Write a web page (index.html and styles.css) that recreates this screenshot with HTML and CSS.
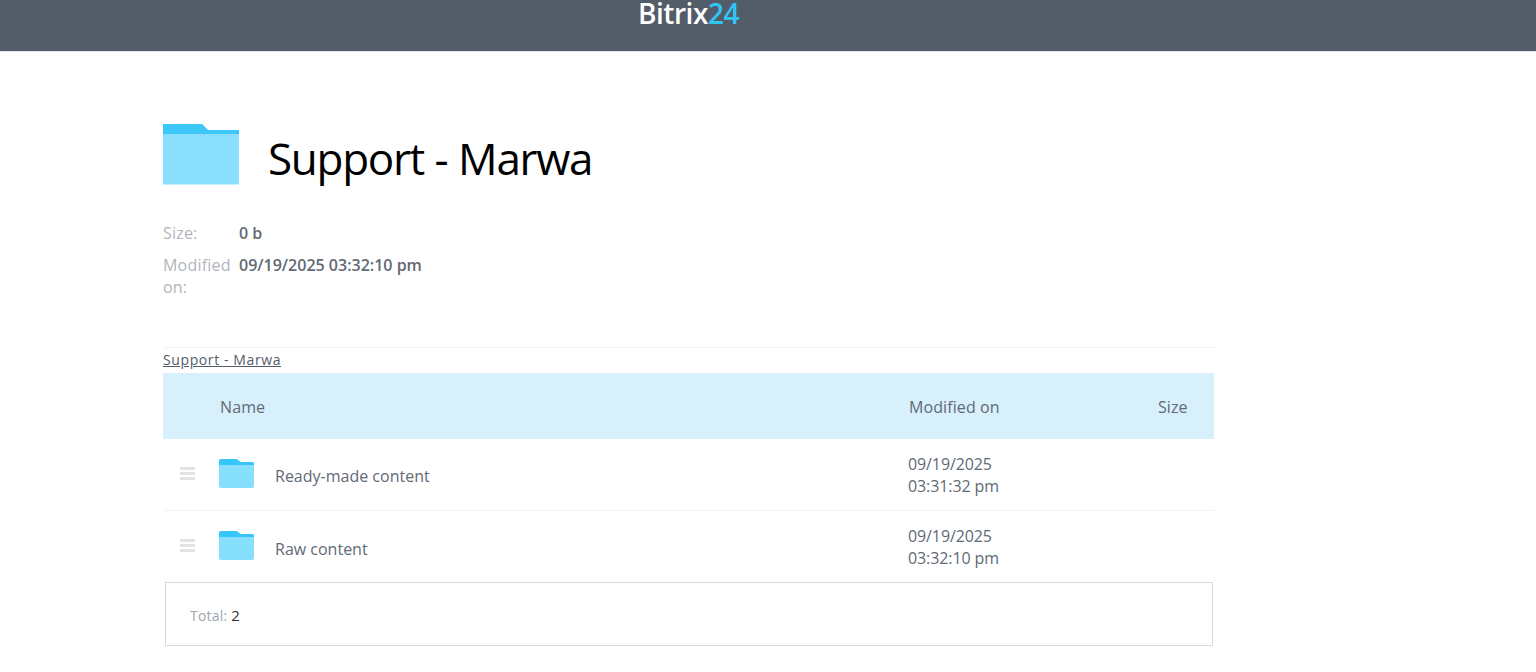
FILE: index.html
```html
<!DOCTYPE html>
<html lang="en">
<head>
<meta charset="utf-8">
<title>Support - Marwa</title>
<link rel="stylesheet" href="styles.css">
</head>
<body>
<header class="topbar">
  <div class="logo">Bitrix<span class="logo-num">24</span></div>
</header>
<main class="content">
  <div class="title-row">
    <svg class="title-icon" viewBox="0 0 76 61" aria-hidden="true">
      <path fill="#8ae0fc" d="M0 0H39L45 6H76V60.500H0Z"/>
      <path fill="#3ec8fa" d="M0 0H39L45 6H76V10H0Z"/>
    </svg>
    <h1 class="title">Support - Marwa</h1>
  </div>
  <dl class="meta">
    <dt class="meta-label">Size:</dt>
    <dd class="meta-value">0 b</dd>
    <dt class="meta-label">Modified on:</dt>
    <dd class="meta-value">09/19/2025 03:32:10 pm</dd>
  </dl>
  <nav class="crumbs"><a class="crumb" href="#">Support - Marwa</a></nav>
  <div class="grid">
    <div class="grid-head">
      <div class="cell-name head-name">Name</div>
      <div class="cell-date">Modified on</div>
      <div class="cell-size">Size</div>
    </div>
    <div class="grid-row">
      <div class="handle"><i></i><i></i><i></i></div>
      <svg class="row-icon" viewBox="0 0 35 29" aria-hidden="true">
        <path fill="#85dffd" d="M2 0H16Q18 0 19 1L21.500 3H33Q35 3 35 5V27Q35 29 33 29H2Q0 29 0 27V2Q0 0 2 0Z"/>
        <path fill="#35c6fb" d="M2 0H16Q18 0 19 1L21.500 3H33Q35 3 35 5V6H0V2Q0 0 2 0Z"/>
      </svg>
      <div class="cell-name row-name">Ready-made content</div>
      <div class="row-date">09/19/2025<br>03:31:32 pm</div>
    </div>
    <div class="grid-row">
      <div class="handle"><i></i><i></i><i></i></div>
      <svg class="row-icon" viewBox="0 0 35 29" aria-hidden="true">
        <path fill="#85dffd" d="M2 0H16Q18 0 19 1L21.500 3H33Q35 3 35 5V27Q35 29 33 29H2Q0 29 0 27V2Q0 0 2 0Z"/>
        <path fill="#35c6fb" d="M2 0H16Q18 0 19 1L21.500 3H33Q35 3 35 5V6H0V2Q0 0 2 0Z"/>
      </svg>
      <div class="cell-name row-name">Raw content</div>
      <div class="row-date">09/19/2025<br>03:32:10 pm</div>
    </div>
  </div>
  <div class="total"><span class="total-label">Total:</span> <span class="total-num">2</span></div>
</main>
</body>
</html>
```
FILE: styles.css
```css
* { box-sizing: border-box; }
html, body { margin: 0; padding: 0; background: #fff; }
body {
  font-family: "Open Sans", "Noto Sans", "Liberation Sans", sans-serif;
  color: #535c69;
  overflow: hidden;
  height: 672px;
}
.topbar {
  height: 52px;
  background: #535c69;
  border-bottom: 1px solid #e4e7ec;
  padding-left: 638px;
}
.logo {
  font-size: 28px;
  line-height: 26px;
  font-weight: 600;
  color: #fff;
  letter-spacing: -0.45px;
}
.logo-num { color: #2fc6f6; }
.content {
  width: 1051px;
  margin-left: 163px;
  padding-top: 72px;
}
.title-row {
  display: flex;
  align-items: center;
  gap: 29px;
  height: 61px;
}
.title-icon { width: 76px; height: 61px; display: block; flex: none; }
.title {
  margin: 0;
  padding-top: 6px;
  font-size: 44px;
  line-height: 68px;
  font-weight: 400;
  color: #000;
  letter-spacing: -1.3px;
  word-spacing: 0.5px;
}
.meta {
  display: grid;
  grid-template-columns: 76px auto;
  justify-content: start;
  margin: 37px 0 0;
  row-gap: 10px;
  font-size: 16px;
  line-height: 22px;
}
.meta-label { color: #b0b5bc; letter-spacing: 0.2px; }
.meta-value { margin: 0; font-weight: 600; color: #616974; letter-spacing: 0; }
.crumbs {
  margin-top: 49px;
  border-top: 1px solid #f2f2f2;
  height: 26px;
  font-size: 14px;
  line-height: 24px;
}
.crumb { color: #535c69; text-decoration: underline; letter-spacing: 0.6px; }
.grid-head {
  display: flex;
  align-items: center;
  height: 66px;
  padding-top: 2px;
  background: #d7f0fb;
  font-size: 16px;
  letter-spacing: 0.1px;
  color: #626a75;
}
.head-name { padding-left: 57px; }
.cell-name { flex: 1; }
.cell-date { width: 249px; flex: none; }
.cell-size { width: 56px; flex: none; }
.grid-row {
  display: flex;
  align-items: center;
  height: 72px;
  border-bottom: 1px solid #f2f2f2;
  font-size: 16px;
  line-height: 22px;
  letter-spacing: 0;
  color: #626a75;
}
.grid-row:last-child { border-bottom: 0; }
.handle {
  display: flex;
  flex-direction: column;
  gap: 2px;
  width: 15px;
  margin: -3px 0 0 17px;
  flex: none;
}
.handle i { display: block; height: 3px; background: #e2e3e5; }
.row-icon { width: 35px; height: 29px; flex: none; display: block; margin: -3px 0 0 24px; }
.row-name { padding: 3px 0 0 21px; }
.row-date { width: 306px; flex: none; letter-spacing: -0.1px; }
.total {
  width: 1048px;
  height: 64px;
  margin: -1px 0 0 2px;
  border: 1px solid #d9d9d9;
  padding-left: 24px;
  font-size: 14px;
  line-height: 64px;
  letter-spacing: 0.2px;
}
.total-label { color: #a1a6ae; }
.total-num { color: #2b2f36; font-size: 15px; }
```
